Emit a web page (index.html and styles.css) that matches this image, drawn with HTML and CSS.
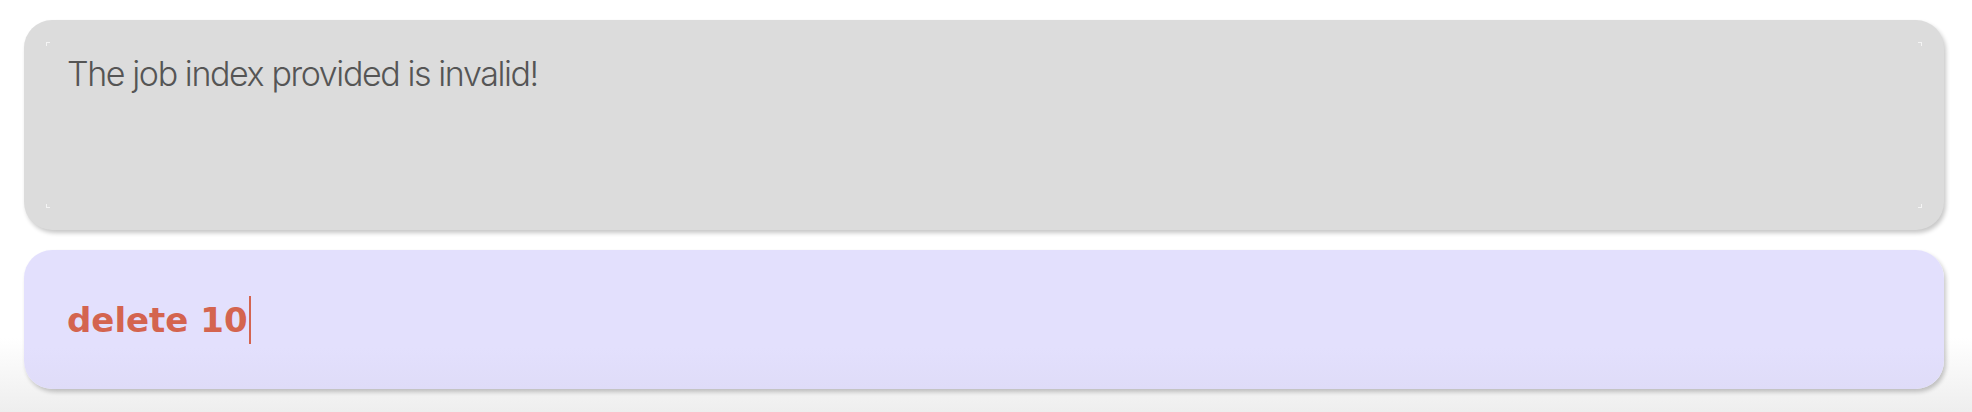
FILE: index.html
```html
<!DOCTYPE html>
<html>
<head>
<meta charset="utf-8">
<link rel="stylesheet" href="styles.css">
</head>
<body>
<div class="page">
  <div class="card output">
    <span class="mark tl"></span><span class="mark tr"></span>
    <span class="mark bl"></span><span class="mark br"></span>
    <p class="message">The job index provided is invalid!</p>
  </div>
  <div class="card input">
    <span class="command">delete 10</span><span class="caret"></span>
  </div>
</div>
</body>
</html>
```
FILE: styles.css
```css
html, body {
  margin: 0;
  padding: 0;
}
body {
  width: 1972px;
  height: 412px;
  overflow: hidden;
  background: linear-gradient(to bottom, #ffffff 0%, #ffffff 82%, #eeeeee 100%);
}
.page {
  display: flex;
  flex-direction: column;
  gap: 20px;
  padding: 20px 28px 0 24px;
}
.card {
  border-radius: 28px;
  box-shadow: 2px 3px 4px rgba(0, 0, 0, 0.22);
  box-sizing: border-box;
}
.output {
  position: relative;
  height: 210px;
  background: #dcdcdc;
  padding: 32px 43px;
}
.message {
  margin: 0;
  font-family: Inter, "Noto Sans", sans-serif;
  font-weight: 300;
  font-size: 34px;
  line-height: 44px;
  letter-spacing: -1.4px;
  color: #555555;
}
.mark {
  position: absolute;
  width: 3px;
  height: 3px;
}
.mark.tl { left: 22px; top: 22px; border-left: 1px solid #f4f4f4; border-top: 1px solid #f4f4f4; }
.mark.tr { right: 22px; top: 22px; border-right: 1px solid #f4f4f4; border-top: 1px solid #f4f4f4; }
.mark.bl { left: 22px; bottom: 22px; border-left: 1px solid #f4f4f4; border-bottom: 1px solid #f4f4f4; }
.mark.br { right: 22px; bottom: 22px; border-right: 1px solid #f4f4f4; border-bottom: 1px solid #f4f4f4; }
.input {
  height: 139px;
  background: linear-gradient(to bottom, #e3e0fd 0%, #e3e0fd 70%, #dfdcf8 100%);
  padding: 0 43px;
  display: flex;
  align-items: center;
}
.command {
  font-family: "DejaVu Sans", Verdana, sans-serif;
  font-weight: bold;
  font-size: 34px;
  color: #d4644f;
}
.caret {
  width: 2px;
  height: 48px;
  margin-left: 1px;
  background: #d4644f;
}
```
